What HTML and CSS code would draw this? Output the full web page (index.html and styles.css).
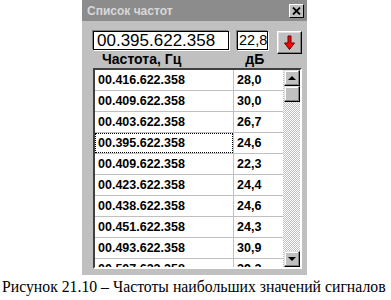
FILE: index.html
```html
<!DOCTYPE html>
<html>
<head>
<meta charset="utf-8">
<title>Список частот</title>
<link rel="stylesheet" href="styles.css">
</head>
<body>

<div class="window">
  <div class="titlebar">
    <span class="title">Список частот</span>
    <span class="close"><svg width="9" height="8" viewBox="0 0 9 8"><path d="M1 0.5 L8 7.5 M8 0.5 L1 7.5" stroke="#000" stroke-width="1.8"/></svg></span>
  </div>

  <div class="toolbar">
    <div class="field freq">00.395.622.358</div>
    <div class="field level">22,8</div>
    <div class="btn-down">
      <svg width="13" height="16" viewBox="0 0 13 16"><path d="M5 1 H8 V8 H11.5 L6.5 14.5 L1.5 8 H5 Z" fill="#f00" stroke="#600" stroke-width="1"/></svg>
    </div>
  </div>

  <div class="head"><span class="h-freq">Частота, Гц</span><span class="h-db">дБ</span></div>

  <div class="list">
    <div class="rows">
      <div class="row"><span class="c-freq">00.416.622.358</span><span class="c-db">28,0</span></div>
      <div class="row"><span class="c-freq">00.409.622.358</span><span class="c-db">30,0</span></div>
      <div class="row"><span class="c-freq">00.403.622.358</span><span class="c-db">26,7</span></div>
      <div class="row"><span class="c-freq focus">00.395.622.358</span><span class="c-db">24,6</span></div>
      <div class="row"><span class="c-freq">00.409.622.358</span><span class="c-db">22,3</span></div>
      <div class="row"><span class="c-freq">00.423.622.358</span><span class="c-db">24,4</span></div>
      <div class="row"><span class="c-freq">00.438.622.358</span><span class="c-db">24,6</span></div>
      <div class="row"><span class="c-freq">00.451.622.358</span><span class="c-db">24,3</span></div>
      <div class="row"><span class="c-freq">00.493.622.358</span><span class="c-db">30,9</span></div>
      <div class="row"><span class="c-freq">00.507.622.358</span><span class="c-db">29,2</span></div>
    </div>
    <div class="scroll">
      <div class="sb-btn"><i class="arr-up"></i></div>
      <div class="thumb"></div>
      <div class="track"></div>
      <div class="sb-btn"><i class="arr-down"></i></div>
    </div>
  </div>
</div>

<p class="caption">Рисунок 21.10 – Частоты наибольших значений сигналов</p>

</body>
</html>
```

FILE: styles.css
```css
body { margin: 0; width: 391px; height: 300px; background: #fff; overflow: hidden; }

.window { margin-left: 82px; width: 225px; height: 275px; background: #c0c0c0;
          font-family: "Liberation Sans", Arial, sans-serif; }

.titlebar { display: flex; justify-content: space-between; align-items: flex-start;
            height: 19px; padding: 2px 3px 0 5px; background: #8c8c8c; }
.title { color: #d8d8d8; font-weight: bold; font-size: 12px; line-height: 19px; }
.close { display: flex; align-items: center; justify-content: center; margin-top: 2px;
         width: 13px; height: 12px; background: #c0c0c0;
         border: 1px solid; border-color: #fff #000 #000 #fff; }

.toolbar { display: flex; align-items: flex-start; height: 19px; margin-top: 10px; padding-left: 11px; }
.field { box-sizing: border-box; height: 19px; background: #fff; border: 1px solid #000;
         box-shadow: -1px -1px 0 #808080, 1px 1px 0 #fff; overflow: hidden; white-space: nowrap; }
.freq { width: 136px; padding-left: 3px; font-size: 17px; line-height: 17px; }
.level { width: 31px; margin-left: 8px; padding-left: 1px; font-size: 14.5px; line-height: 17px; }
.btn-down { box-sizing: border-box; display: flex; align-items: center; justify-content: center;
            width: 25px; height: 23px; margin-left: 9px; background: #c0c0c0;
            border: 1px solid; border-color: #fff #000 #000 #fff;
            box-shadow: inset -1px -1px 0 #808080, inset 1px 1px 0 #dfdfdf; position: relative; z-index: 1; }

.head { display: flex; height: 18px; font-weight: bold; font-size: 14px; line-height: 18px; }
.h-freq { margin-left: 20px; }
.h-db { margin-left: 64px; }

.list { box-sizing: border-box; display: flex; width: 209px; height: 201px; margin-left: 11px;
        border: 2px solid; border-color: #404040 #fff #fff #404040; background: #fff; overflow: hidden; }
.rows { width: 188px; }
.row { display: flex; height: 20px; border-bottom: 1px solid #c0c0c0;
       font-weight: bold; font-size: 12.5px; line-height: 20px; }
.c-freq { box-sizing: border-box; width: 138px; padding-left: 3px; }
.c-db { box-sizing: border-box; width: 50px; padding-left: 3px; border-left: 1px solid #c0c0c0; }
.focus { outline: 1px dotted #000; outline-offset: -1px; }

.scroll { display: flex; flex-direction: column; align-items: flex-end; width: 17px; height: 197px;
          background: repeating-conic-gradient(#fff 0 25%, #c0c0c0 0 50%) 0 0 / 2px 2px; }
.sb-btn, .thumb { box-sizing: border-box; width: 16px; height: 16px; background: #c0c0c0;
                  border: 1px solid; border-color: #dfdfdf #000 #000 #dfdfdf;
                  box-shadow: inset -1px -1px 0 #808080, inset 1px 1px 0 #fff; }
.sb-btn { display: flex; align-items: center; justify-content: center; }
.track { flex: 1; }
.arr-up { width: 0; height: 0; border-left: 4px solid transparent; border-right: 4px solid transparent;
          border-bottom: 4px solid #000; }
.arr-down { width: 0; height: 0; border-left: 4px solid transparent; border-right: 4px solid transparent;
            border-top: 4px solid #000; }

.caption { margin: 2px 0 0 2px; font-family: "Liberation Serif", "Times New Roman", serif;
           font-size: 15.75px; line-height: 20px; white-space: nowrap; }
```
